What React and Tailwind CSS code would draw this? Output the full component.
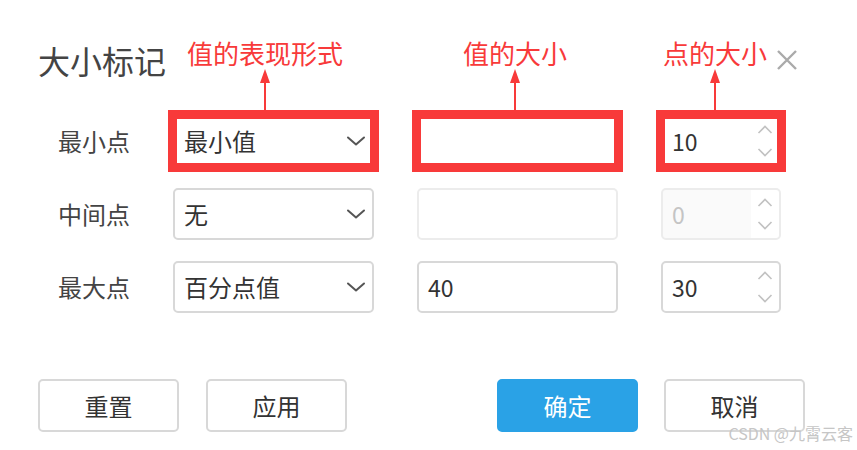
import React from "react";

const RED = "#f83a3a";

function Chevron() {
  return (
    <svg width="20" height="10" viewBox="0 0 20 10" fill="none">
      <path d="M2 1.5 L10 8.5 L18 1.5" stroke="#555" strokeWidth="2" strokeLinejoin="round" strokeLinecap="round" />
    </svg>
  );
}

// red square frame drawn over a marked field
function Mark({ on, children }) {
  return (
    <div className="relative">
      {children}
      {on && <span className="absolute -inset-[5px] border-[9px] border-[#f83a3a] pointer-events-none" />}
    </div>
  );
}

function Select({ value }) {
  return (
    <div className="w-[201px] h-[52px] rounded-[5px] border-2 border-[#d8d8d8] bg-white flex items-center justify-between pl-[9px] pr-[6px] text-[24px] text-[#333]">
      <span>{value}</span>
      <Chevron />
    </div>
  );
}

function TextBox({ value, disabled }) {
  return (
    <div
      className={
        "w-[201px] h-[52px] rounded-[5px] border-2 bg-white flex items-center pl-[9px] text-[23px] text-[#333] " +
        (disabled ? "border-[#ececec]" : "border-[#d8d8d8]")
      }
    >
      {value}
    </div>
  );
}

function Spinner({ value, disabled }) {
  return (
    <div
      className={
        "w-[120px] h-[52px] rounded-[5px] border-2 flex items-stretch text-[23px] " +
        (disabled ? "border-[#ececec] bg-[#fafafa] text-[#c4c4c4]" : "border-[#d8d8d8] bg-white text-[#333]")
      }
    >
      <div className="flex-1 flex items-center pl-[9px]">{value}</div>
      <div className={"w-[28px] flex flex-col items-center justify-between py-[8px] " + (disabled ? "bg-white rounded-r-[4px]" : "")}>
        <svg width="16" height="9" viewBox="0 0 16 9" fill="none">
          <path d="M1.5 8 L8 1.5 L14.5 8" stroke="#c2c2c2" strokeWidth="1.6" />
        </svg>
        <svg width="16" height="9" viewBox="0 0 16 9" fill="none">
          <path d="M1.5 1 L8 7.5 L14.5 1" stroke="#c2c2c2" strokeWidth="1.6" />
        </svg>
      </div>
    </div>
  );
}

function Note({ text, className }) {
  return (
    <div className={"absolute top-[36px] flex flex-col items-center " + className}>
      <span className="text-[26px] leading-[34px] text-[#f83a3a] whitespace-nowrap">{text}</span>
      <svg width="12" height="42" viewBox="0 0 12 42" className="-mt-[1px]">
        <polygon points="6,0 11,14 1,14" fill={RED} />
        <rect x="5" y="12" width="2" height="30" fill={RED} />
      </svg>
    </div>
  );
}

function Button({ children, primary }) {
  return (
    <button
      className={
        "w-[141px] h-[53px] rounded-[5px] text-[24px] " +
        (primary ? "bg-[#2aa2e6] text-white border-2 border-[#2aa2e6]" : "bg-white text-[#333] border-2 border-[#d8d8d8]")
      }
    >
      {children}
    </button>
  );
}

const rows = [
  { label: "最小点", sel: "最小值", text: "", num: "10", marked: true },
  { label: "中间点", sel: "无", text: "", num: "0", disabled: true },
  { label: "最大点", sel: "百分点值", text: "40", num: "30" },
];

export default function App() {
  return (
    <div className="relative w-[857px] h-[450px] bg-white overflow-hidden font-['Noto_Sans_CJK_SC','Noto_Sans',sans-serif] text-[#333]">
      <div className="flex items-center h-[60px] mt-[30px] pl-[38px] pr-[60px]">
        <h1 className="text-[32px] text-[#444] font-normal">大小标记</h1>
        <svg className="ml-auto" width="20" height="20" viewBox="0 0 20 20">
          <path d="M1 1 L19 19 M19 1 L1 19" stroke="#aaa" strokeWidth="2.4" />
        </svg>
      </div>

      <div className="flex flex-col gap-[21px] mt-[25px]">
        {rows.map((r) => (
          <div key={r.label} className="flex items-center h-[52px] pl-[58px]">
            <div className="w-[115px] text-[24px] text-[#444]">{r.label}</div>
            <Mark on={r.marked}>
              <Select value={r.sel} />
            </Mark>
            <div className="ml-[43px]">
              <Mark on={r.marked}>
                <TextBox value={r.text} disabled={r.disabled} />
              </Mark>
            </div>
            <div className="ml-[43px]">
              <Mark on={r.marked}>
                <Spinner value={r.num} disabled={r.disabled} />
              </Mark>
            </div>
          </div>
        ))}
      </div>

      <div className="flex items-center mt-[66px] pl-[38px]">
        <Button>重置</Button>
        <div className="ml-[27px]">
          <Button>应用</Button>
        </div>
        <div className="ml-[150px]">
          <Button primary>确定</Button>
        </div>
        <div className="ml-[26px]">
          <Button>取消</Button>
        </div>
      </div>

      <Note text="值的表现形式" className="left-[187px]" />
      <Note text="值的大小" className="left-[463px]" />
      <Note text="点的大小" className="left-[663px]" />

      <div className="absolute right-[4px] bottom-[5px] text-[16px] text-[#c6c6c6] whitespace-nowrap">
        CSDN @九霄云客
      </div>
    </div>
  );
}
